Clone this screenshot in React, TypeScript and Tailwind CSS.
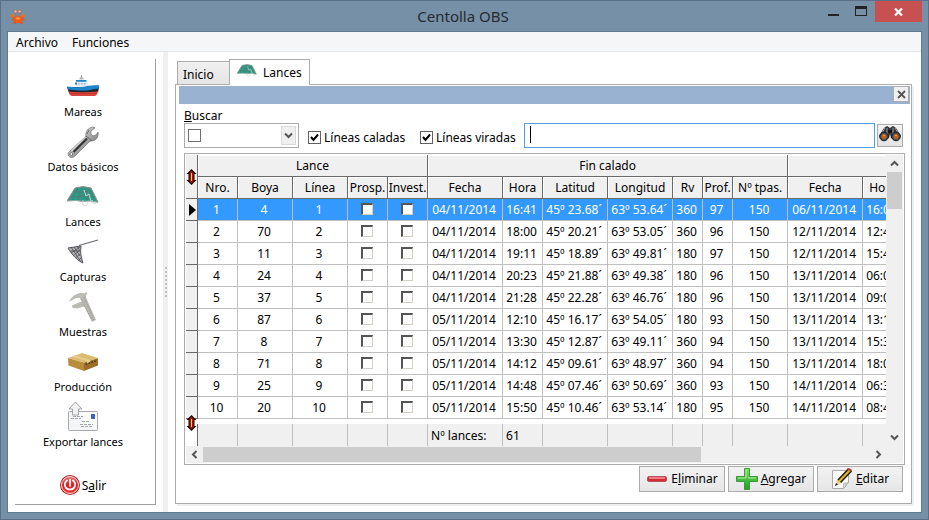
import React from "react";

function CrabIcon() {
  return (
    <svg width="16" height="16" viewBox="0 0 16 16" aria-hidden="true">
      <path d="M1.500 11l3-1M14.500 11l-3-1M3 14l2.500-2M13 14l-2.500-2M5 15l1-2M11 15l-1-2" stroke="#d9501c" strokeWidth="1.200" />
      <path d="M6 8L5.500 3M10 8l-.5-5" stroke="#b86a5a" />
      <ellipse cx="8" cy="10.500" rx="4.800" ry="3.800" fill="#ee5a1c" />
      <circle cx="5.500" cy="2.500" r="1.500" fill="#e8c0b4" stroke="#b8604a" strokeWidth=".7" />
      <circle cx="9.700" cy="2.500" r="1.500" fill="#e8c0b4" stroke="#b8604a" strokeWidth=".7" />
      <path d="M1 8c-1-3 1-4 1.500-2L4 5c1 2 0 4-3 3zM15 8c1-3-1-4-1.500-2L12 5c-1 2 0 4 3 3z" fill="#f07028" />
      <path d="M2 8l3 2M14 8l-3 2" stroke="#e05a20" strokeWidth="1.200" />
      <ellipse cx="8" cy="9.500" rx="2.600" ry="1.300" fill="#f99432" />
    </svg>
  );
}

function BoatIcon() {
  return (
    <svg width="32" height="32" viewBox="0 0 32 32" aria-hidden="true">
      <path d="M1 19l30 0c0 3-1 5-3 6H5c-2 0-3-3-4-6z" fill="#d8423a" />
      <path d="M2 22.500h28" stroke="#b8302c" strokeWidth=".6" />
      <path d="M0 16h32l-.7 4.500C20 21.500 10 21.500 1.500 20.500z" fill="#1e2630" />
      <path d="M0 15.500c6 .5 11 1.500 17 0 5-1.200 10-1 15-1.500l-.5 3.800c-5 0-8 1.700-14 1.700S6 19 1 18.500z" fill="#1c86cc" />
      <path d="M9 15.500V9h10l3 5.500-5 1z" fill="#e4eaef" />
      <path d="M9 9.800h10.500M8 12.500h2" stroke="#1c86cc" strokeWidth="1.800" />
      <path d="M12.500 8.500V7l1-1h2l1 1v1.500z" fill="#b4b8bc" />
      <path d="M14.500 6V4" stroke="#999" />
      <path d="M11 12.800h1.500M14 12.800h1.500M17 12.800h1.500" stroke="#8aa4b8" strokeWidth="1.200" />
    </svg>
  );
}

function WrenchIcon() {
  return (
    <svg width="32" height="32" viewBox="0 0 32 32" aria-hidden="true">
      <defs>
        <linearGradient id="steel" x1="0" y1="0" x2="1" y2="1">
          <stop offset="0" stopColor="#f4f4f4" />
          <stop offset=".45" stopColor="#b4b4b4" />
          <stop offset="1" stopColor="#4a4a4a" />
        </linearGradient>
      </defs>
      <path d="M1.500 26.500L19 10c-1-4 2-9 8-9l1 1-4 3v3l2 2 3-1 2-3c1 5-2 9-7 9l-2 1L7.500 30.500c-3.500 2.500-8-.5-6-4z" fill="url(#steel)" stroke="#777" strokeWidth=".7" />
      <path d="M6.500 26L20 12.500" stroke="#333" strokeWidth="2.200" />
      <path d="M19 10l6 5M20 8l2-4" stroke="#555" strokeWidth=".8" />
      <path d="M4.500 25L18.500 11" stroke="#eee" />
      <circle cx="4.300" cy="28" r="1.400" fill="#fff" stroke="#555" strokeWidth=".7" />
    </svg>
  );
}

function NetIcon({ size = 32 }: { size?: number }) {
  return (
    <svg width={size} height={size} viewBox="0 0 32 32" aria-hidden="true">
      <path d="M8 7l8-1.500L24 7l7 14-8-1-7 .5-7-1L0 20z" fill="#2c9c88" />
      <path d="M11 7L5 19M15 6l-4 13M19 6l0 13M22 7l5 12M6 11l20 0M3 15.500h25M9 8l12 11M23 8L10 18" stroke="#54756c" strokeWidth=".6" />
      <path d="M8 7l8-1.500L24 7l7 14M8 7L0 20" stroke="#8d8f88" fill="none" />
      <path d="M0 20l9-.5 7 1 7-.5 8 1.500" stroke="#9da49f" fill="none" />
      <path d="M16 19c-2 7 5 8 5 1M25 19c0 3 2 4 4 4M17 9l2 6 3-2 2 7" stroke="#d0d6d2" fill="none" />
    </svg>
  );
}

function HandNetIcon() {
  return (
    <svg width="32" height="32" viewBox="0 0 32 32" aria-hidden="true">
      <path d="M12 9.500L31 4" stroke="#68686e" strokeWidth="1.200" />
      <path d="M1 12l13-2c-1 7 0 11 2 17-5-2-11-8-15-15z" fill="#b4b4b8" stroke="#54545a" />
      <path d="M4 11l10 15M7 11l6 9M10 10l3 5M13 11L4 17M13 14l-7 6M13 18l-5 4M14 22l-3 3M3 15h10" stroke="#4c4c52" strokeWidth=".8" />
    </svg>
  );
}

function CaliperIcon() {
  return (
    <svg width="32" height="32" viewBox="0 0 32 32" aria-hidden="true">
      <path d="M11 3l6-1 12 27-4 2z" fill="#b8b7b1" />
      <path d="M2 11c2-5 6-8 11-9l4 0 2 3-5 2-5 0z" fill="#bebdb8" />
      <path d="M5 15l2-1 8-3 2 4-7 2-4-.5zM17 7l3-5-2 0M17 7l2-2" fill="#bbbab5" stroke="#bbbab5" />
      <path d="M14 8l11 21M17 6l10 23" stroke="#8b8a84" strokeWidth=".8" strokeDasharray="1 1" />
    </svg>
  );
}

function BoxIcon() {
  return (
    <svg width="32" height="32" viewBox="0 0 32 32" aria-hidden="true">
      <path d="M1 12l16 4.500V25L1.500 19.500z" fill="#b98c3c" />
      <path d="M17 16.500L31 12v7.500L17 25z" fill="#9c7028" />
      <path d="M1 12L15 7l16 5-14 4.500z" fill="#dcbc70" />
      <path d="M8 9.500l15 4.500v2.500l-3 1V15L5 10.500z" fill="#e8d094" />
      <path d="M18.500 18.500L30 14.500" stroke="#5e4214" strokeWidth="1.600" strokeDasharray="2 1" />
    </svg>
  );
}

function MailExportIcon() {
  return (
    <svg width="32" height="32" viewBox="0 0 32 32" aria-hidden="true">
      <rect x="1.500" y="10.500" width="29" height="19" rx="1" fill="#f3f5f7" stroke="#a5a9ad" />
      <path d="M2 11h28v18z" fill="#fff" opacity=".6" />
      <path d="M5.500 11V8H2l6.500-7L15 8h-3.500v6h-6z" fill="#f1f1f1" stroke="#a0a4a8" />
      <rect x="24" y="13" width="4" height="5" fill="#3468c4" />
      <path d="M6 15.500h10M4 17.500h10M15 20.500h7M13 23.500h13M14 25.500h11" stroke="#a2a6aa" strokeDasharray="3 1" />
    </svg>
  );
}

function PowerIcon() {
  return (
    <svg width="20" height="20" viewBox="0 0 20 20" aria-hidden="true">
      <defs>
        <linearGradient id="power" x1="0" y1="0" x2="0" y2="1">
          <stop offset="0" stopColor="#ee7474" />
          <stop offset=".5" stopColor="#d81e22" />
          <stop offset="1" stopColor="#f03a3a" />
        </linearGradient>
      </defs>
      <circle cx="10" cy="10" r="10" fill="#b42020" />
      <circle cx="10" cy="10" r="8.500" fill="url(#power)" stroke="#f6dede" />
      <path d="M7 5.500c-4 3-2 9 3 9s7-6 3-9M10 4.500v6.500" stroke="#fff" strokeWidth="1.700" fill="none" strokeLinecap="round" />
    </svg>
  );
}

function BinocularsIcon() {
  return (
    <svg width="22" height="16" viewBox="0 0 22 16" aria-hidden="true">
      <path d="M5 2l3-2 3 2 3-2 3 2 5 8-4 4-6-2-1-4-1 4-6 2-4-4z" fill="#34363a" />
      <path d="M6 2L3 7M8 2v6M16 2l3 5M14 2v6" stroke="#9a9ca0" />
      <path d="M9 4h4v3H9z" fill="#15161a" />
      <circle cx="5" cy="10.500" r="4.300" fill="#4a4c50" stroke="#1c1d20" />
      <circle cx="17" cy="10.500" r="4.300" fill="#4a4c50" stroke="#1c1d20" />
      <circle cx="5" cy="10.500" r="2.500" fill="#bf6420" />
      <circle cx="17" cy="10.500" r="2.500" fill="#bf6420" />
      <path d="M4 9.500h2M16 9.500h2" stroke="#e69a50" />
    </svg>
  );
}

function MinusIcon() {
  return (
    <svg width="22" height="22" viewBox="0 0 22 22" aria-hidden="true">
      <rect x="1.500" y="8.500" width="19" height="5" rx="1.500" fill="#d42a34" stroke="#b8525a" />
      <path d="M3 10h16" stroke="#f39a9e" strokeWidth="1.500" />
    </svg>
  );
}

function PlusIcon() {
  return (
    <svg width="22" height="22" viewBox="0 0 22 22" aria-hidden="true">
      <defs>
        <linearGradient id="plus" x1="0" y1="0" x2="0" y2="1">
          <stop offset="0" stopColor="#8ade6e" />
          <stop offset=".6" stopColor="#3cb83c" />
          <stop offset="1" stopColor="#22a022" />
        </linearGradient>
      </defs>
      <path d="M8.500 .5h5v8h8v5h-8v8h-5v-8h-8v-5h8z" fill="url(#plus)" stroke="#3a9a3a" strokeLinejoin="round" />
      <path d="M10 2v8H2M12 10h8" stroke="#b4ec9c" fill="none" />
    </svg>
  );
}

function EditIcon() {
  return (
    <svg width="22" height="22" viewBox="0 0 22 22" aria-hidden="true">
      <path d="M1.500 2.500h16v12l-5 6h-11z" fill="#fbfbfb" stroke="#aaa" />
      <path d="M12.500 20.500v-5l5-1z" fill="#d0d0d0" stroke="#aaa" strokeWidth=".6" />
      <path d="M4 18l2-6L17 0l4 3L10 15z" fill="#e8b62c" />
      <path d="M7 12L17.500 1M9.500 14.500L20.500 3" stroke="#242424" strokeWidth="1.600" />
      <path d="M16 1l2-1 3 2-1 2z" fill="#b83a32" />
      <path d="M4 18l2-6 4 3z" fill="#ead2a0" />
      <path d="M4 18l1-3 2 1.500z" fill="#222" />
    </svg>
  );
}

function ResizeArrows() {
  return (
    <svg width="11" height="16" viewBox="0 0 11 16" className="block" aria-hidden="true">
      <path d="M5.500 0L10.500 5H8.500v6h2l-5 5-5-5h2V5h-2z" fill="#180404" />
      <path d="M5.500 1.500L8 4.500H7.500v7H8l-2.500 3L3 11.500h.5v-7H3z" fill="#a01414" />
      <path d="M5.500 4v8" stroke="#ffd83c" />
    </svg>
  );
}

function Chevron({ className }: { className: string }) {
  return (
    <svg width="9" height="9" viewBox="0 0 9 9" className={className} aria-hidden="true">
      <path d="M1 2.500l3.500 3.500L8 2.500" fill="none" stroke="#555" strokeWidth="2" />
    </svg>
  );
}

const sections = [
  { label: "Mareas", icon: <BoatIcon /> },
  { label: "Datos básicos", icon: <WrenchIcon /> },
  { label: "Lances", icon: <NetIcon /> },
  { label: "Capturas", icon: <HandNetIcon /> },
  { label: "Muestras", icon: <CaliperIcon /> },
  { label: "Producción", icon: <BoxIcon /> },
  { label: "Exportar lances", icon: <MailExportIcon /> },
];

const columns = ["Nro.", "Boya", "Línea", "Prosp.", "Invest.", "Fecha", "Hora", "Latitud", "Longitud", "Rv", "Prof.", "Nº tpas.", "Fecha", "Hora"];

const rows = [
  ["1", "4", "1", "04/11/2014", "16:41", "45º 23.68´", "63º 53.64´", "360", "97", "150", "06/11/2014", "16:00"],
  ["2", "70", "2", "04/11/2014", "18:00", "45º 20.21´", "63º 53.05´", "360", "96", "150", "12/11/2014", "12:40"],
  ["3", "11", "3", "04/11/2014", "19:11", "45º 18.89´", "63º 49.81´", "180", "97", "150", "12/11/2014", "15:40"],
  ["4", "24", "4", "04/11/2014", "20:23", "45º 21.88´", "63º 49.38´", "180", "96", "150", "13/11/2014", "06:00"],
  ["5", "37", "5", "04/11/2014", "21:28", "45º 22.28´", "63º 46.76´", "180", "96", "150", "13/11/2014", "09:00"],
  ["6", "87", "6", "05/11/2014", "12:10", "45º 16.17´", "63º 54.05´", "180", "93", "150", "13/11/2014", "13:10"],
  ["7", "8", "7", "05/11/2014", "13:30", "45º 12.87´", "63º 49.11´", "360", "94", "150", "13/11/2014", "15:30"],
  ["8", "71", "8", "05/11/2014", "14:12", "45º 09.61´", "63º 48.97´", "360", "94", "150", "13/11/2014", "18:00"],
  ["9", "25", "9", "05/11/2014", "14:48", "45º 07.46´", "63º 50.69´", "360", "93", "150", "14/11/2014", "06:30"],
  ["10", "20", "10", "05/11/2014", "15:50", "45º 10.46´", "63º 53.14´", "180", "95", "150", "14/11/2014", "08:40"],
];

const groupCell = "h-[22px] border-r border-b border-[#696969] bg-[#f0f0f0] p-0 pt-px text-center font-normal shadow-[inset_1px_1px_0_#fff]";
const headCell = "h-[22px] border-r border-b border-[#696969] bg-[#f0f0f0] p-0 pt-px text-center font-normal whitespace-nowrap shadow-[inset_1px_1px_0_#fff]";
const lastHeadCell = "h-[22px] border-r border-b border-[#696969] bg-[#f0f0f0] p-0 pt-px pl-1.5 text-left font-normal shadow-[inset_1px_1px_0_#fff]";
const markerCell = "h-[22px] border-r border-b border-[#696969] bg-[#f0f0f0] p-0";
const bodyCell = "h-[22px] border-r border-b border-[#c0c0c0] p-0 pt-px pr-0.5 text-center whitespace-nowrap";
const lastBodyCell = "h-[22px] border-r border-b border-[#c0c0c0] p-0 pt-px pl-[3px] text-left whitespace-nowrap";
const footCell = "h-[22px] border-r border-[#c0c0c0] bg-[#f0f0f0] p-0 pt-0.5 pl-[3px] text-left";

function GridCheck({ label }: { label: string }) {
  return (
    <td className="h-[22px] border-r border-b border-[#c0c0c0] p-0 pr-0.5 pb-0.5">
      <input
        type="checkbox"
        aria-label={label}
        className="mx-auto block size-3 appearance-none border-t-2 border-l-2 border-r border-b border-t-[#555] border-l-[#555] border-r-[#d4d0c8] border-b-[#d4d0c8] bg-white"
      />
    </td>
  );
}

function LancesTable() {
  return (
    <table className="w-[730px] table-fixed border-separate border-spacing-0 leading-5">
      <colgroup>
        <col className="w-[12px]" />
        <col className="w-[40px]" />
        <col className="w-[55px]" />
        <col className="w-[55px]" />
        <col className="w-[40px]" />
        <col className="w-[40px]" />
        <col className="w-[75px]" />
        <col className="w-[40px]" />
        <col className="w-[65px]" />
        <col className="w-[65px]" />
        <col className="w-[30px]" />
        <col className="w-[30px]" />
        <col className="w-[55px]" />
        <col className="w-[75px]" />
        <col className="w-[53px]" />
      </colgroup>
      <thead>
        <tr>
          <td rowSpan={2} className={markerCell}>
            <ResizeArrows />
          </td>
          <th colSpan={5} className={groupCell}>Lance</th>
          <th colSpan={7} className={groupCell}>Fin calado</th>
          <th colSpan={2} className={groupCell}></th>
        </tr>
        <tr>
          {columns.map((c, i) => (
            <th key={i} className={i === 13 ? lastHeadCell : headCell}>{c}</th>
          ))}
        </tr>
      </thead>
      <tbody>
        {rows.map((r, i) => (
          <tr key={r[0]} className={i === 0 ? "bg-[#3399ff] text-white" : "bg-white"}>
            <td className={markerCell}>
              {i === 0 && (
                <svg width="7" height="12" viewBox="0 0 7 12" className="ml-[3px] block" aria-hidden="true">
                  <path d="M0 0l7 6-7 6z" fill="#000" />
                </svg>
              )}
            </td>
            {r.map((value, j) => (
              <React.Fragment key={j}>
                {j === 3 && (
                  <>
                    <GridCheck label={"Prosp. " + r[0]} />
                    <GridCheck label={"Invest. " + r[0]} />
                  </>
                )}
                <td className={j === 11 ? lastBodyCell : bodyCell}>{value}</td>
              </React.Fragment>
            ))}
          </tr>
        ))}
      </tbody>
      <tfoot>
        <tr>
          <td colSpan={15} className="h-[5px] p-0"></td>
        </tr>
        <tr>
          <td className="h-[22px] border-r border-[#696969] p-0"></td>
          {columns.map((_, i) => (
            <td key={i} className={footCell}>{i === 5 ? "Nº lances:" : i === 6 ? "61" : ""}</td>
          ))}
        </tr>
      </tfoot>
    </table>
  );
}

const actionButton = "flex h-[26px] w-[86px] items-center justify-center gap-[3px] border border-[#acacac] bg-linear-to-b from-[#f2f2f2] to-[#e6e6e6] whitespace-nowrap";

function CheckOption({ label, className }: { label: string; className: string }) {
  return (
    <label className={className}>
      <span className="relative block size-[13px]">
        <input type="checkbox" defaultChecked className="block size-[13px] appearance-none border border-[#606060] bg-white" />
        <svg width="13" height="13" viewBox="0 0 13 13" className="pointer-events-none absolute inset-0" aria-hidden="true">
          <path d="M3 6l2.500 3L10 3.500" fill="none" stroke="#000" strokeWidth="2" />
        </svg>
      </span>
      {label}
    </label>
  );
}

export default function App() {
  return (
    <div className="flex min-h-screen flex-col border border-[#5a7086] bg-[#7590a7] px-1.5 pb-1.5 font-['Noto_Sans','Open_Sans',sans-serif] text-xs text-black">
      <header className="flex h-[30px] items-center">
        <span className="ml-[3px] mt-0.5">
          <CrabIcon />
        </span>
        <h1 className="flex-1 pl-20 text-center text-[15px] leading-5 text-[#262b30]">Centolla OBS</h1>
        <div className="flex self-start">
          <button aria-label="Minimizar" className="flex h-[21px] w-6 items-start justify-center pt-[13px] pl-0.5">
            <span className="block h-0.5 w-[11px] bg-[#222]" />
          </button>
          <button aria-label="Maximizar" className="flex h-[21px] w-[31px] items-start justify-center pt-[5px] pl-0.5">
            <span className="block h-2.5 w-3 border border-t-[3px] border-[#222]" />
          </button>
          <button aria-label="Cerrar" className="flex h-[21px] w-[47px] items-center justify-center bg-[#c75050]">
            <svg width="9" height="8" viewBox="0 0 9 8" aria-hidden="true">
              <path d="M1 .5l7 7M8 .5l-7 7" stroke="#fff" strokeWidth="2.200" />
            </svg>
          </button>
        </div>
      </header>

      <div className="flex flex-1 flex-col border border-[#5f7a93] bg-white">
        <nav className="flex h-5 items-center gap-3.5 border-b border-[#e4e5e6] bg-[#f5f6f7] pt-0.5 pl-2">
          <button>Archivo</button>
          <button>Funciones</button>
        </nav>

        <div className="flex flex-1">
          <aside className="flex w-[155px] shrink-0 p-[7px]">
            <div className="flex flex-1 flex-col items-center border-r border-b border-[#a0a0a0] pt-3 pr-1">
              {sections.map((s) => (
                <button key={s.label} className="flex h-[55px] flex-col items-center text-[11px] leading-[18px] whitespace-nowrap">
                  {s.icon}
                  {s.label}
                </button>
              ))}
              <button className="mt-[18px] flex items-center gap-0.5 leading-5">
                <PowerIcon />
                <span className="pt-0.5">
                  S<u>a</u>lir
                </span>
              </button>
            </div>
          </aside>

          <div className="flex w-[5px] shrink-0 items-center justify-center bg-[#f0f0f0]">
            <div className="h-[30px] border-l-2 border-dotted border-[#c0c0c0]" />
          </div>

          <main className="flex min-w-0 flex-1 flex-col pt-[7px] pr-[9px] pb-2 pl-[7px]">
            <div role="tablist" className="flex items-end pl-0.5">
              <button role="tab" aria-selected="false" className="h-[23px] w-[53px] border border-b-0 border-[#acacac] bg-linear-to-b from-[#f0f0f0] to-[#e5e5e5] pt-1 pl-[5px] text-left">
                Inicio
              </button>
              <button role="tab" aria-selected="true" className="relative -mb-px -ml-px flex h-[26px] w-[81px] items-center gap-1.5 border border-b-0 border-[#acacac] bg-white pl-[7px]">
                <span className="-mt-1">
                  <NetIcon size={20} />
                </span>
                Lances
              </button>
            </div>

            <section className="flex flex-1 flex-col border border-[#acacac] pt-px pr-px pl-[3px] shadow-[2px_2px_0_#f0f0f0]">
              <div className="flex h-[18px] justify-end bg-[#99b2d1] pr-px">
                <button aria-label="Cerrar panel" className="flex size-4 items-center justify-center border border-[#acacac] bg-[#f0f0f0]">
                  <svg width="9" height="9" viewBox="0 0 9 9" aria-hidden="true">
                    <path d="M1 1l7 7M8 1L1 8" stroke="#555" strokeWidth="1.800" />
                  </svg>
                </button>
              </div>

              <div className="px-[5px] pt-1">
                <label htmlFor="buscar" className="block h-[15px] leading-[15px]">
                  <u>B</u>uscar
                </label>
                <div className="flex h-[25px] pr-0.5">
                  <div className="relative mr-[9px] flex w-[115px] items-center border border-[#acacac] pl-[3px]">
                    <input type="checkbox" aria-label="Valor" className="size-[13px] shrink-0 appearance-none border border-[#707070] bg-white" />
                    <select id="buscar" className="h-full min-w-0 flex-1 appearance-none bg-transparent outline-none">
                      <option></option>
                    </select>
                    <span className="pointer-events-none absolute top-0.5 right-0.5 flex h-[19px] w-[15px] items-center justify-center border border-[#d9d9d9] bg-[#efefef]">
                      <Chevron className="" />
                    </span>
                  </div>
                  <CheckOption label="Líneas caladas" className="flex w-[112px] items-center gap-[3px] pt-1 whitespace-nowrap" />
                  <CheckOption label="Líneas viradas" className="flex w-[104px] items-center gap-[3px] pt-1 whitespace-nowrap" />
                  <div className="flex min-w-0 flex-1 border border-[#569de5] py-0.5 pl-[5px]">
                    <span className="h-[17px] w-px shrink-0 bg-black" />
                    <input type="text" aria-label="Texto a buscar" className="min-w-0 flex-1 outline-none" />
                  </div>
                  <button aria-label="Buscar" className="mt-px ml-0.5 flex h-[23px] w-[26px] items-center justify-center border border-[#acacac] bg-linear-to-b from-[#f2f2f2] to-[#e4e4e4] pb-1">
                    <BinocularsIcon />
                  </button>
                </div>

                <div className="relative mt-[5px] border border-[#acacac] p-px">
                  <div className="flex">
                    <div className="min-w-0 flex-1 overflow-hidden">
                      <LancesTable />
                    </div>
                    <div className="flex w-[17px] shrink-0 flex-col items-center bg-[#f0f0f0]">
                      <span className="flex h-[17px] items-center">
                        <Chevron className="rotate-180" />
                      </span>
                      <span className="h-[37px] w-[15px] bg-[#cdcdcd]" />
                      <span className="mt-auto flex h-[17px] items-center">
                        <Chevron className="" />
                      </span>
                    </div>
                  </div>
                  <div className="flex h-[17px] items-center bg-[#f0f0f0] pr-4">
                    <span className="flex w-[17px] shrink-0 justify-center">
                      <Chevron className="rotate-90" />
                    </span>
                    <span className="h-[15px] w-[71%] bg-[#cdcdcd]" />
                    <span className="ml-auto flex w-[17px] shrink-0 justify-center">
                      <Chevron className="-rotate-90" />
                    </span>
                  </div>
                  <span className="absolute bottom-[33px] left-px">
                    <ResizeArrows />
                  </span>
                </div>

                <div className="mt-px flex justify-end gap-[3px] pr-0.5">
                  <button className={actionButton}>
                    <MinusIcon />
                    <span>
                      E<u>l</u>iminar
                    </span>
                  </button>
                  <button className={actionButton}>
                    <PlusIcon />
                    <span>
                      <u>A</u>gregar
                    </span>
                  </button>
                  <button className={actionButton}>
                    <EditIcon />
                    <span>
                      <u>E</u>ditar
                    </span>
                  </button>
                </div>
              </div>
            </section>
          </main>
        </div>
      </div>
    </div>
  );
}
